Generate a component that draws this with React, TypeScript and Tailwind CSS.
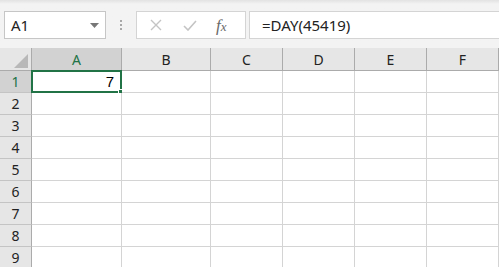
const columns = [
  { label: "A", width: "w-[90px]" },
  { label: "B", width: "w-[89px]" },
  { label: "C", width: "w-[72px]" },
  { label: "D", width: "w-[72px]" },
  { label: "E", width: "w-[72px]" },
  { label: "F", width: "w-[72px]" },
]

const rows = [1, 2, 3, 4, 5, 6, 7, 8, 9]

function FormulaBar() {
  return (
    <div className="h-[48px] flex items-start pt-[11px] pl-[4px] bg-[#f3f3f3] bg-gradient-to-b from-[#e2e2e2] to-[#f3f3f3] to-[4px]">
      {/* Name box */}
      <div className="h-[28px] w-[102px] flex items-center justify-between border border-[#c6c6c6] bg-white pl-[6px] pr-[6px]">
        <span className="text-[15px] text-[#222] leading-none">A1</span>
        <svg width="9" height="5" viewBox="0 0 9 5">
          <path d="M0 0 H9 L4.5 5 Z" fill="#777" />
        </svg>
      </div>

      {/* Separator dots */}
      <div className="w-[30px] h-[28px] flex flex-col items-center justify-center gap-[2px]">
        <span className="w-[2px] h-[2px] bg-[#a8a8a8]" />
        <span className="w-[2px] h-[2px] bg-[#a8a8a8]" />
        <span className="w-[2px] h-[2px] bg-[#a8a8a8]" />
      </div>

      {/* Cancel / enter / fx */}
      <div className="h-[28px] w-[110px] flex items-center border border-[#d4d4d4] bg-white">
        <svg className="ml-[13px]" width="12" height="12" viewBox="0 0 12 12">
          <path d="M1 1 L11 11 M11 1 L1 11" stroke="#c4c4c4" strokeWidth="1.4" />
        </svg>
        <svg className="ml-[21px]" width="14" height="11" viewBox="0 0 14 11">
          <path d="M1 6 L5 10 L13 1" stroke="#c4c4c4" strokeWidth="1.6" fill="none" />
        </svg>
        <span className="ml-[19px] text-[17px] italic text-[#6a6a6a] font-['Liberation_Serif',serif] leading-none">
          f<span className="text-[13px]">x</span>
        </span>
      </div>

      {/* Formula input */}
      <div className="ml-[3px] h-[28px] flex-1 flex items-center border border-r-0 border-[#d4d4d4] bg-white pl-[12px]">
        <span className="text-[15px] text-[#222] leading-none">=DAY(45419)</span>
      </div>
    </div>
  )
}

function Grid() {
  return (
    <div className="flex flex-col">
      {/* Column headers */}
      <div className="flex h-[23px]">
        <div className="w-[32px] bg-[#e6e6e6] border-r border-b border-[#ababab] relative">
          <svg className="absolute right-[3px] bottom-[2px]" width="14" height="14" viewBox="0 0 14 14">
            <path d="M14 0 V14 H0 Z" fill="#b8b8b8" />
          </svg>
        </div>
        {columns.map((col, i) => (
          <div
            key={col.label}
            className={`${col.width} flex items-center justify-center border-r border-b border-[#ababab] text-[14px] ${
              i === 0 ? "bg-[#d2d2d2] text-[#217346]" : "bg-[#e6e6e6] text-[#222]"
            }`}
          >
            {col.label}
          </div>
        ))}
      </div>

      {/* Rows */}
      {rows.map((r) => (
        <div key={r} className="flex h-[22px]">
          <div
            className={`w-[32px] flex items-center justify-center border-r border-b border-r-[#ababab] border-b-[#c4c4c4] text-[14px] ${
              r === 1 ? "bg-[#d2d2d2] text-[#217346]" : "bg-[#e6e6e6] text-[#222]"
            }`}
          >
            {r}
          </div>
          {columns.map((col, i) => (
            <div
              key={col.label}
              className={`${col.width} relative border-r border-b border-[#d4d4d4] bg-white`}
            >
              {r === 1 && i === 0 && (
                <>
                  <div className="absolute -left-[1px] -top-[1px] -right-[1px] -bottom-[1px] border-2 border-[#217346] flex items-center justify-end pr-[6px]">
                    <span className="text-[15px] text-black leading-none font-['Liberation_Sans',sans-serif]">7</span>
                  </div>
                  <div className="absolute -right-[3px] -bottom-[3px] w-[6px] h-[6px] bg-[#217346] border border-white" />
                </>
              )}
            </div>
          ))}
        </div>
      ))}
    </div>
  )
}

export default function App() {
  return (
    <div className="w-[499px] h-[267px] overflow-hidden bg-white font-['Noto_Sans','Open_Sans',sans-serif]">
      <FormulaBar />
      <Grid />
    </div>
  )
}
